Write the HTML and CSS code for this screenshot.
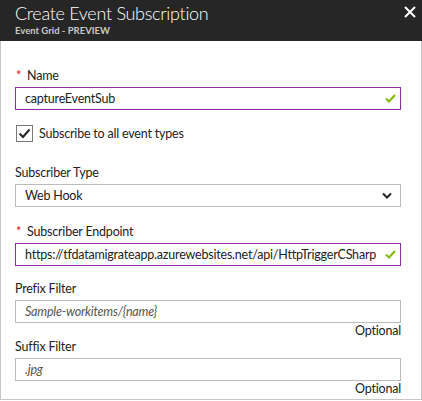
FILE: index.html
```html
<!DOCTYPE html>
<html>
<head>
<meta charset="utf-8">
<link rel="stylesheet" href="styles.css">
</head>
<body>
<div class="panel">
  <div class="header">
    <div class="titles">
      <div class="title">Create Event Subscription</div>
      <div class="subtitle">Event Grid - PREVIEW</div>
    </div>
    <svg class="close" width="12" height="12" viewBox="0 0 12 12"><path d="M1 1L11 11M11 1L1 11" stroke="#fff" stroke-width="2"/></svg>
  </div>
  <div class="form">
    <div class="label"><span class="req">*</span>Name</div>
    <div class="input valid">
      <span class="value">captureEventSub</span>
      <svg class="ok" width="11" height="9" viewBox="0 0 11 9"><path d="M1 4.5L4 7.5L10 1" stroke="#7fba00" stroke-width="2" fill="none"/></svg>
    </div>

    <div class="check-row">
      <span class="checkbox"><svg width="13" height="11" viewBox="0 0 13 11"><path d="M1.5 5.5L5 9L11.5 1.5" stroke="#222" stroke-width="2" fill="none"/></svg></span>
      <span class="check-label">Subscribe to all event types</span>
    </div>

    <div class="label plain">Subscriber Type</div>
    <div class="input select">
      <span class="value">Web Hook</span>
      <svg class="chev" width="10" height="7" viewBox="0 0 10 7"><path d="M1 1.5L5 5.5L9 1.5" stroke="#222" stroke-width="2" fill="none"/></svg>
    </div>

    <div class="label gap"><span class="req">*</span>Subscriber Endpoint</div>
    <div class="input valid">
      <span class="value">https://tfdatamigrateapp.azurewebsites.net/api/HttpTriggerCSharp</span>
      <svg class="ok" width="11" height="9" viewBox="0 0 11 9"><path d="M1 4.5L4 7.5L10 1" stroke="#7fba00" stroke-width="2" fill="none"/></svg>
    </div>

    <div class="label plain gap2">Prefix Filter</div>
    <div class="input">
      <span class="placeholder">Sample-workitems/{name}</span>
    </div>
    <div class="optional">Optional</div>

    <div class="label plain">Suffix Filter</div>
    <div class="input">
      <span class="placeholder">.jpg</span>
    </div>
    <div class="optional">Optional</div>
  </div>
</div>
</body>
</html>
```

FILE: styles.css
```css
* { box-sizing: border-box; }
html, body { margin: 0; padding: 0; background: #fff; }
body {
  font-family: "Segoe UI", Lato, "Open Sans", sans-serif;
  font-size: 12.5px;
  letter-spacing: -0.2px;
  color: #222;
  width: 422px;
  height: 401px;
  overflow: hidden;
}
.panel {
  width: 422px;
  height: 400px;
  border: 1px solid #c6c6c6;
  border-top: none;
}
.header {
  background: #262626;
  height: 41px;
  margin: 0 -1px;
  display: flex;
  justify-content: space-between;
  align-items: flex-start;
  padding: 0 6px 0 15px;
}
.title {
  color: #fff;
  font-weight: 300;
  font-size: 18px;
  letter-spacing: -0.3px;
  line-height: 20px;
  margin-top: 3px;
}
.subtitle {
  color: #c8c8c8;
  font-size: 9.5px;
  letter-spacing: 0;
  font-weight: 700;
  line-height: 12px;
  margin-top: 2px;
}
.close { margin-top: 6px; }
.form {
  padding: 26px 20px 0 14px;
}
.label {
  line-height: 17px;
  height: 17px;
  margin-bottom: 3px;
  display: flex;
  align-items: center;
}
.label.gap { margin-top: 16px; }
.label.gap2 { margin-top: 14px; }
.req {
  color: #e81123;
  font-size: 13px;
  width: 11px;
  margin-left: 1px;
}
.input {
  height: 23px;
  border: 1px solid #bbb;
  display: flex;
  align-items: center;
  padding: 0 4px 0 9px;
  white-space: nowrap;
  overflow: hidden;
}
.input.valid { border-color: #8a2da5; }
.input .value { flex: 1; overflow: hidden; }
.input .ok { flex: none; margin-left: 4px; }
.input.select { padding-right: 8px; }
.placeholder {
  font-style: italic;
  color: #555;
}
.check-row {
  display: flex;
  align-items: center;
  margin-top: 15px;
  margin-bottom: 22px;
  gap: 6px;
}
.checkbox {
  width: 17px;
  height: 17px;
  border: 1px solid #777;
  display: flex;
  align-items: center;
  justify-content: center;
  margin-left: 1px;
}
.optional {
  text-align: right;
  color: #222;
  font-size: 12.5px;
  line-height: 14px;
  height: 14px;
  margin-top: 1px;
}
```
